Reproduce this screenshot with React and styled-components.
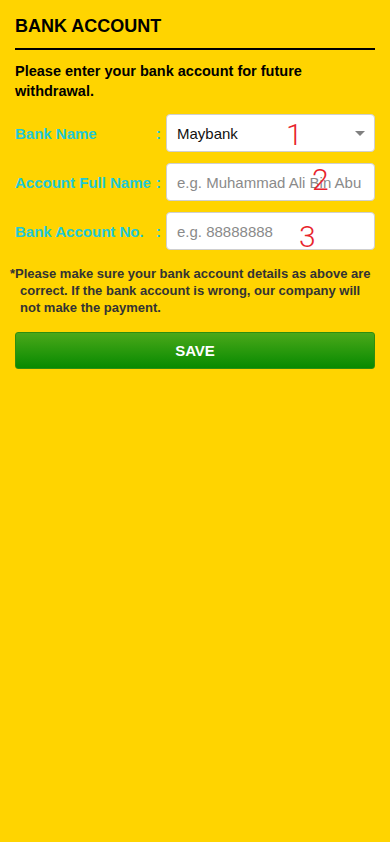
import React, { useState } from 'react';
import styled, { createGlobalStyle } from 'styled-components';

const GlobalStyle = createGlobalStyle`
  html, body {
    margin: 0;
    padding: 0;
    background: #ffd400;
    font-family: "Liberation Sans", Arial, sans-serif;
  }
  * { box-sizing: border-box; }
`;

const banks = ['Maybank', 'CIMB Bank', 'Public Bank', 'RHB Bank', 'Hong Leong Bank'];

export default function App() {
  const [bank, setBank] = useState('Maybank');
  const [fullName, setFullName] = useState('');
  const [accountNo, setAccountNo] = useState('');

  return (
    <Page>
      <GlobalStyle />
      <Title>BANK ACCOUNT</Title>
      <Intro>Please enter your bank account for future withdrawal.</Intro>

      <Form onSubmit={(e) => e.preventDefault()}>
        <Row>
          <Label>
            <span>Bank Name</span>
            <Colon>:</Colon>
          </Label>
          <Field>
            <Select value={bank} onChange={(e) => setBank(e.target.value)}>
              {banks.map((b) => (
                <option key={b} value={b}>{b}</option>
              ))}
            </Select>
            <Caret />
            <Marker $left={120} $top={5}>1</Marker>
          </Field>
        </Row>

        <Row>
          <Label>
            <span>Account Full Name</span>
            <Colon>:</Colon>
          </Label>
          <Field>
            <Input
              type="text"
              placeholder="e.g. Muhammad Ali Bin Abu"
              value={fullName}
              onChange={(e) => setFullName(e.target.value)}
            />
            <Marker $left={146} $top={1}>2</Marker>
          </Field>
        </Row>

        <Row>
          <Label>
            <span>Bank Account No.</span>
            <Colon>:</Colon>
          </Label>
          <Field>
            <Input
              type="text"
              placeholder="e.g. 88888888"
              value={accountNo}
              onChange={(e) => setAccountNo(e.target.value)}
            />
            <Marker $left={133} $top={9}>3</Marker>
          </Field>
        </Row>

        <Note>
          *Please make sure your bank account details as above are correct. If the bank
          account is wrong, our company will not make the payment.
        </Note>

        <SaveButton type="submit">SAVE</SaveButton>
      </Form>
    </Page>
  );
}

// --- STYLED COMPONENTS ---

const Page = styled.div`
  min-height: 842px;
  background: #ffd400;
  padding: 15px 15px 0 15px;
  color: #000;
`;

const Title = styled.h2`
  margin: 0;
  padding-bottom: 11px;
  font-size: 18px;
  font-weight: 700;
  line-height: 22px;
  border-bottom: 2px solid #000;
`;

const Intro = styled.p`
  margin: 11px 0 0 0;
  font-size: 14.5px;
  font-weight: 700;
  line-height: 20px;
`;

const Form = styled.form`
  margin-top: 13px;
  display: flex;
  flex-direction: column;
  gap: 11px;
`;

const Row = styled.div`
  display: grid;
  grid-template-columns: 151px 1fr;
  align-items: center;
`;

const Label = styled.label`
  display: flex;
  justify-content: space-between;
  padding-right: 5px;
  color: #1fc9d6;
  font-size: 15px;
  font-weight: 700;
  white-space: nowrap;
`;

const Colon = styled.span`
  font-weight: 700;
`;

const Field = styled.div`
  position: relative;
`;

const baseControl = `
  width: 100%;
  height: 38px;
  background: #fff;
  border: 1px solid #cfcfcf;
  border-radius: 4px;
  padding: 0 10px;
  font-family: "Liberation Sans", Arial, sans-serif;
  font-size: 15px;
  color: #111;
  outline: none;
`;

const Input = styled.input`
  ${baseControl}
  &::placeholder { color: #8a8a8a; }
`;

const Select = styled.select`
  ${baseControl}
  appearance: none;
  -webkit-appearance: none;
  padding-right: 30px;
`;

const Caret = styled.span`
  position: absolute;
  right: 10px;
  top: 17px;
  width: 0;
  height: 0;
  border-left: 5px solid transparent;
  border-right: 5px solid transparent;
  border-top: 5px solid #808080;
  pointer-events: none;
`;

const Marker = styled.span`
  position: absolute;
  left: ${(p) => p.$left}px;
  top: ${(p) => p.$top}px;
  font-family: Roboto, "Open Sans", sans-serif;
  font-weight: 300;
  font-size: 30px;
  line-height: 32px;
  color: #e8242c;
  pointer-events: none;
`;

const Note = styled.p`
  margin: 4px -5px 0 -5px;
  padding-left: 10px;
  text-indent: -10px;
  font-size: 13px;
  font-weight: 700;
  line-height: 17px;
  color: #333;
`;

const SaveButton = styled.button`
  margin-top: 5px;
  height: 37px;
  width: 100%;
  border: 1px solid #2f8d10;
  border-radius: 3px;
  background: linear-gradient(to bottom, #4ba81a, #078a00);
  color: #fff;
  font-family: "Liberation Sans", Arial, sans-serif;
  font-size: 15px;
  font-weight: 700;
  cursor: pointer;
`;
